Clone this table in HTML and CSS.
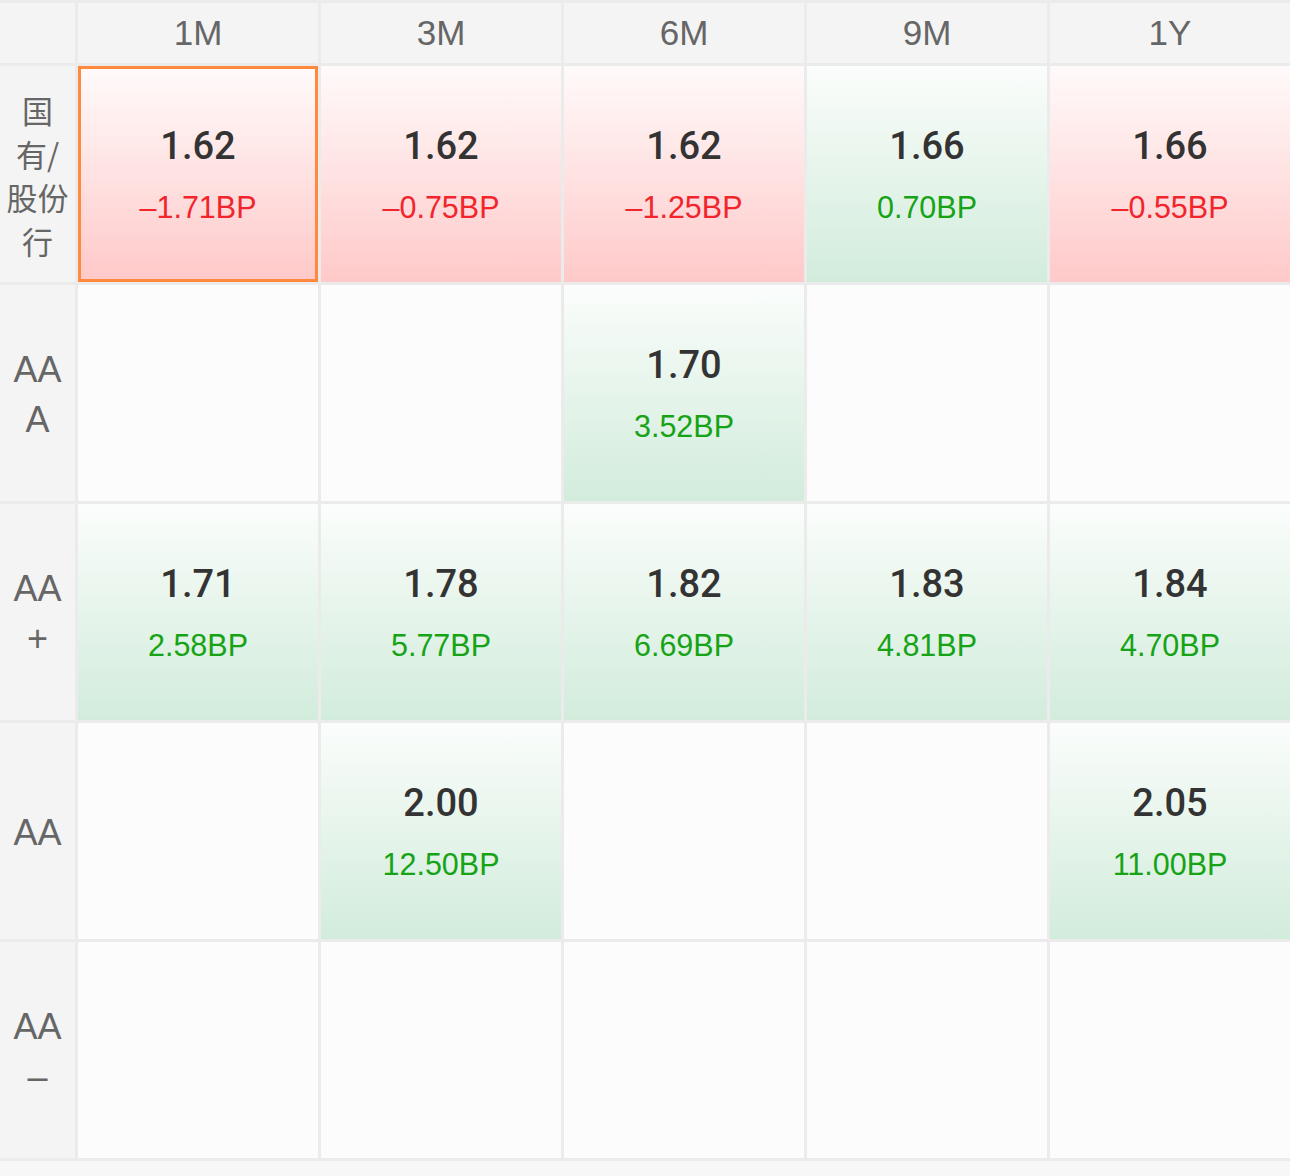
FILE: index.html
```html
<!DOCTYPE html>
<html lang="zh">
<head>
<meta charset="utf-8">
<title>存单收益率矩阵</title>
<link rel="stylesheet" href="styles.css">
</head>
<body>
<div class="matrix">
  <div class="corner"></div>
  <div class="head">1M</div>
  <div class="head">3M</div>
  <div class="head">6M</div>
  <div class="head">9M</div>
  <div class="head">1Y</div>

  <div class="label cjk">国<br>有/<br>股份<br>行</div>
  <div class="cell down selected"><span class="rate">1.62</span><span class="chg">–1.71BP</span></div>
  <div class="cell down"><span class="rate">1.62</span><span class="chg">–0.75BP</span></div>
  <div class="cell down"><span class="rate">1.62</span><span class="chg">–1.25BP</span></div>
  <div class="cell up"><span class="rate">1.66</span><span class="chg">0.70BP</span></div>
  <div class="cell down"><span class="rate">1.66</span><span class="chg">–0.55BP</span></div>

  <div class="label">AA<br>A</div>
  <div class="cell empty"></div>
  <div class="cell empty"></div>
  <div class="cell up"><span class="rate">1.70</span><span class="chg">3.52BP</span></div>
  <div class="cell empty"></div>
  <div class="cell empty"></div>

  <div class="label">AA<br>+</div>
  <div class="cell up"><span class="rate">1.71</span><span class="chg">2.58BP</span></div>
  <div class="cell up"><span class="rate">1.78</span><span class="chg">5.77BP</span></div>
  <div class="cell up"><span class="rate">1.82</span><span class="chg">6.69BP</span></div>
  <div class="cell up"><span class="rate">1.83</span><span class="chg">4.81BP</span></div>
  <div class="cell up"><span class="rate">1.84</span><span class="chg">4.70BP</span></div>

  <div class="label">AA</div>
  <div class="cell empty"></div>
  <div class="cell up"><span class="rate">2.00</span><span class="chg">12.50BP</span></div>
  <div class="cell empty"></div>
  <div class="cell empty"></div>
  <div class="cell up"><span class="rate">2.05</span><span class="chg">11.00BP</span></div>

  <div class="label">AA<br>–</div>
  <div class="cell empty"></div>
  <div class="cell empty"></div>
  <div class="cell empty"></div>
  <div class="cell empty"></div>
  <div class="cell empty"></div>
</div>
</body>
</html>
```

FILE: styles.css
```css
html, body {
  margin: 0;
  padding: 0;
  background: #f7f7f8;
}

body {
  font-family: "Liberation Sans", "Noto Sans CJK SC", sans-serif;
}

.matrix {
  display: grid;
  grid-template-columns: 75px repeat(5, 240px);
  grid-template-rows: 60px repeat(5, 216px);
  gap: 3px;
  padding: 3px 0;
  background: #ebebeb;
  width: 1290px;
}

.corner,
.head,
.label {
  background: #f4f4f4;
  color: #666666;
  display: flex;
  align-items: center;
  justify-content: center;
  text-align: center;
}

.head {
  font-size: 35px;
}

.label {
  font-size: 36px;
  line-height: 50px;
  padding-top: 4px;
}

.label.cjk {
  font-family: "Noto Sans CJK SC", sans-serif;
  font-size: 31px;
  line-height: 43.5px;
  padding-top: 2px;
}

.cell {
  display: flex;
  flex-direction: column;
  align-items: center;
  justify-content: center;
  box-sizing: border-box;
}

.cell.empty {
  background: #fcfcfc;
}

.cell.down {
  background: linear-gradient(to bottom, #fffafa 0%, #ffe7e7 40%, #ffc9c9 100%);
}

.cell.up {
  background: linear-gradient(to bottom, #fbfdfc 0%, #eaf6ee 40%, #d2ecdc 100%);
}

.cell.selected {
  border: 3px solid #ff8a3d;
}

.rate {
  font-family: "Roboto", "Liberation Sans", sans-serif;
  font-weight: 500;
  font-size: 38px;
  line-height: 40px;
  color: #333333;
}

.chg {
  font-size: 30.5px;
  line-height: 32px;
  margin-top: 25px;
}

.down .chg {
  color: #f2242c;
}

.up .chg {
  color: #16a316;
}
```
